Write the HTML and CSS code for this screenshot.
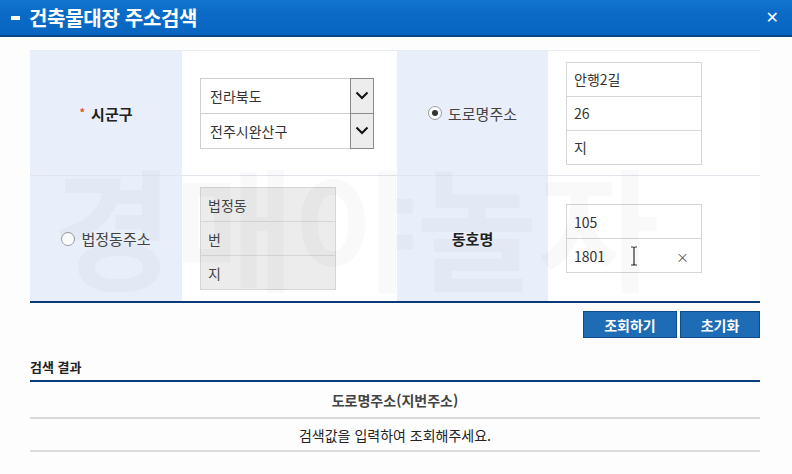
FILE: index.html
```html
<!DOCTYPE html>
<html lang="ko">
<head>
<meta charset="utf-8">
<title>건축물대장 주소검색</title>
<link rel="stylesheet" href="styles.css">
</head>
<body>
<header class="titlebar">
  <h1 class="title"><span class="dash"></span>건축물대장 주소검색</h1>
  <span class="close">✕</span>
</header>

<main class="content">
  <div class="form">
    <div class="label strong"><span class="req">*</span>시군구</div>
    <div class="field">
      <div class="stack">
        <div class="select"><span class="val">전라북도</span><span class="arrow"><svg width="14" height="9" viewBox="0 0 14 9"><path d="M1.5 1.5 L7 7 L12.5 1.5" fill="none" stroke="#111" stroke-width="2"/></svg></span></div>
        <div class="select"><span class="val">전주시완산구</span><span class="arrow"><svg width="14" height="9" viewBox="0 0 14 9"><path d="M1.5 1.5 L7 7 L12.5 1.5" fill="none" stroke="#111" stroke-width="2"/></svg></span></div>
      </div>
    </div>
    <div class="label"><span class="radio on"></span>도로명주소</div>
    <div class="field">
      <div class="stack">
        <div class="input">안행2길</div>
        <div class="input">26</div>
        <div class="input">지</div>
      </div>
    </div>

    <div class="label"><span class="radio"></span>법정동주소</div>
    <div class="field">
      <div class="stack">
        <div class="input dis">법정동</div>
        <div class="input dis">번</div>
        <div class="input dis">지</div>
      </div>
    </div>
    <div class="label strong">동호명</div>
    <div class="field">
      <div class="stack">
        <div class="input">105</div>
        <div class="input typing">1801<span class="ibeam"><svg width="8" height="20" viewBox="0 0 8 20"><path d="M1 1 H3 Q4 1 4 3 V17 Q4 19 3 19 H1 M7 1 H5 Q4 1 4 3 M4 17 Q4 19 5 19 H7" fill="none" stroke="#333" stroke-width="1.2"/></svg></span><span class="clear">×</span></div>
      </div>
    </div>
  </div>

  <div class="actions">
    <button class="btn btn-search">조회하기</button>
    <button class="btn btn-reset">초기화</button>
  </div>

  <section class="results">
    <h2 class="results-title">검색 결과</h2>
    <div class="results-head">도로명주소(지번주소)</div>
    <div class="results-row">검색값을 입력하여 조회해주세요.</div>
  </section>
</main>

<div class="watermark">경매야놀자</div>
</body>
</html>
```

FILE: styles.css
```css
* { box-sizing: border-box; }
html, body { margin: 0; padding: 0; }
body {
  width: 792px;
  height: 474px;
  overflow: hidden;
  background: #fdfdfd;
  font-family: "Noto Sans CJK KR", "Noto Sans", sans-serif;
  color: #333;
  position: relative;
}

.titlebar {
  height: 37px;
  background: linear-gradient(#1275d0, #0a6ac6 40%, #0866c2);
  border-bottom: 2px solid #0a4688;
  display: flex;
  align-items: center;
  justify-content: space-between;
  padding: 0 13px 0 11px;
}
.title {
  margin: 0;
  color: #fff;
  font-size: 20px;
  font-weight: 700;
  display: flex;
  align-items: center;
  letter-spacing: -0.3px;
}
.dash {
  display: inline-block;
  width: 9px;
  height: 4px;
  background: #fff;
  margin-right: 9px;
}
.close {
  color: #fff;
  font-size: 16px;
  font-weight: 700;
  font-family: "DejaVu Sans", sans-serif;
}

.content {
  padding: 13px 32px 0 30px;
}

.form {
  display: grid;
  grid-template-columns: 152px 215px 151px 212px;
  grid-template-rows: 125px 125px;
  border-top: 1px solid #e8ebf0;
  border-bottom: 2px solid #0b3a78;
}
.form > div:nth-child(-n+4) { border-bottom: 1px solid #e2e6ec; }

.label {
  background: #e8eefa;
  display: flex;
  align-items: center;
  justify-content: center;
  font-size: 15px;
  color: #444;
}
.label.strong { font-weight: 700; color: #222; }
.req {
  color: #e0561a;
  font-size: 11px;
  margin-right: 6px;
  position: relative;
  top: -1px;
}
.radio {
  width: 14px;
  height: 14px;
  border: 1px solid #9a9a9a;
  border-radius: 50%;
  background: #fff;
  margin-right: 6px;
  display: inline-flex;
  align-items: center;
  justify-content: center;
}
.radio.on::after {
  content: "";
  width: 6px;
  height: 6px;
  border-radius: 50%;
  background: #333;
}

.field {
  background: #fff;
  display: flex;
  align-items: center;
  padding-left: 18px;
}
.stack { display: flex; flex-direction: column; }

.select {
  width: 174px;
  height: 36px;
  border: 1px solid #d0d0d0;
  background: #fff;
  display: flex;
  align-items: center;
  font-size: 14px;
  color: #333;
}
.select + .select { margin-top: -1px; }
.select .val { flex: 1; padding-left: 9px; }
.select .arrow {
  width: 24px;
  height: 36px;
  margin: -1px -1px -1px 0;
  border: 1px solid #8a8a8a;
  background: #ededed;
  display: flex;
  align-items: center;
  justify-content: center;
}

.input {
  width: 136px;
  height: 35px;
  border: 1px solid #d6d6d6;
  background: #fff;
  font-size: 14px;
  color: #333;
  padding-left: 7px;
  display: flex;
  align-items: center;
  position: relative;
}
.input + .input { margin-top: -1px; }
.input.dis { background: #ececec; color: #444; }
.ibeam { position: absolute; left: 63px; top: 7px; line-height: 0; }
.clear {
  position: absolute;
  right: 12px;
  top: 8px;
  font-size: 13px;
  color: #555;
}

.actions {
  display: flex;
  justify-content: flex-end;
  gap: 3px;
  margin-top: 8px;
}
.btn {
  height: 27px;
  border: 1px solid #0e4a8c;
  background: #1e6cb6;
  color: #fff;
  font-family: inherit;
  font-size: 14px;
  font-weight: 700;
  padding: 0;
}
.btn-search { width: 94px; }
.btn-reset { width: 80px; }

.results { margin-top: 19px; }
.results-title {
  margin: 0;
  font-size: 13px;
  font-weight: 700;
  color: #222;
  padding-bottom: 4px;
  border-bottom: 2px solid #073d7d;
}
.results-head {
  height: 37px;
  display: flex;
  align-items: center;
  justify-content: center;
  font-size: 14px;
  font-weight: 700;
  color: #444;
  border-bottom: 2px solid #d8d8d8;
}
.results-row {
  height: 33px;
  display: flex;
  align-items: center;
  justify-content: center;
  font-size: 14px;
  color: #222;
  border-bottom: 2px solid #dcdcdc;
}

.watermark {
  position: absolute;
  left: 52px;
  top: 158px;
  font-size: 132px;
  font-weight: 700;
  line-height: 1;
  color: rgba(0, 0, 0, 0.022);
  pointer-events: none;
  white-space: nowrap;
}
```
